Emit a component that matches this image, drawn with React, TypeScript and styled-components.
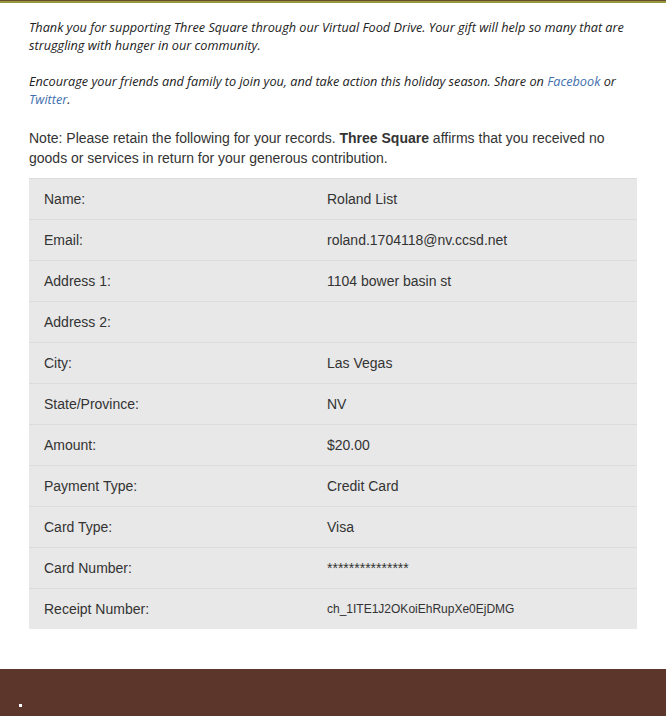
import styled, { createGlobalStyle } from 'styled-components';

const GlobalStyle = createGlobalStyle`
    html, body {
        margin: 0;
        padding: 0;
        background: #fff;
    }
    body {
        font-family: "Liberation Sans", Arial, sans-serif;
        color: #333;
    }
`;

const TopBar = styled.div`
    border-top: 1px solid #6b4a2e;
    height: 2px;
    background: #929a3a;
`;

const Main = styled.main`
    padding: 15px 29px 40px;
`;

const Thanks = styled.p`
    font-family: "Open Sans", sans-serif;
    font-style: italic;
    font-size: 12.7px;
    line-height: 18px;
    color: #222;
    margin: 0 0 18px;

    a {
        color: #3f6fae;
        text-decoration: none;
    }
`;

const Note = styled.p`
    font-size: 14px;
    line-height: 20px;
    margin: 20px 0 10px;
    color: #333;
`;

const Table = styled.div`
    background: #e8e8e8;
`;

const Row = styled.div`
    display: grid;
    grid-template-columns: 283px 1fr;
    border-top: 1px solid #dcdcdc;
    padding: 10px 15px;
    font-size: 14px;
    line-height: 20px;
    color: #333;
`;

const Value = styled.span<{ $small?: boolean }>`
    font-size: ${p => (p.$small ? '12px' : '14px')};
`;

const Footer = styled.footer`
    background: #5c352b;
    height: 60px;
    padding: 35px 19px 0;
    box-sizing: border-box;
`;

const Bullet = styled.span`
    display: block;
    width: 3px;
    height: 3px;
    background: #fff;
`;

const rows: { label: string; value: string; small?: boolean }[] = [
    { label: 'Name:', value: 'Roland List' },
    { label: 'Email:', value: 'roland.1704118@nv.ccsd.net' },
    { label: 'Address 1:', value: '1104 bower basin st' },
    { label: 'Address 2:', value: '' },
    { label: 'City:', value: 'Las Vegas' },
    { label: 'State/Province:', value: 'NV' },
    { label: 'Amount:', value: '$20.00' },
    { label: 'Payment Type:', value: 'Credit Card' },
    { label: 'Card Type:', value: 'Visa' },
    { label: 'Card Number:', value: '***************' },
    { label: 'Receipt Number:', value: 'ch_1ITE1J2OKoiEhRupXe0EjDMG', small: true },
];

export default function App() {
    return (
        <>
            <GlobalStyle />
            <TopBar />
            <Main>
                <Thanks>
                    Thank you for supporting Three Square through our Virtual Food Drive. Your gift will help so many that are struggling with hunger in our community.
                </Thanks>
                <Thanks>
                    Encourage your friends and family to join you, and take action this holiday season. Share on <a href="#">Facebook</a> or <a href="#">Twitter</a>.
                </Thanks>
                <Note>
                    Note: Please retain the following for your records. <strong>Three Square</strong> affirms that you received no goods or services in return for your generous contribution.
                </Note>
                <Table>
                    {rows.map(r => (
                        <Row key={r.label}>
                            <span>{r.label}</span>
                            <Value $small={r.small}>{r.value}</Value>
                        </Row>
                    ))}
                </Table>
            </Main>
            <Footer>
                <Bullet />
            </Footer>
        </>
    );
}
